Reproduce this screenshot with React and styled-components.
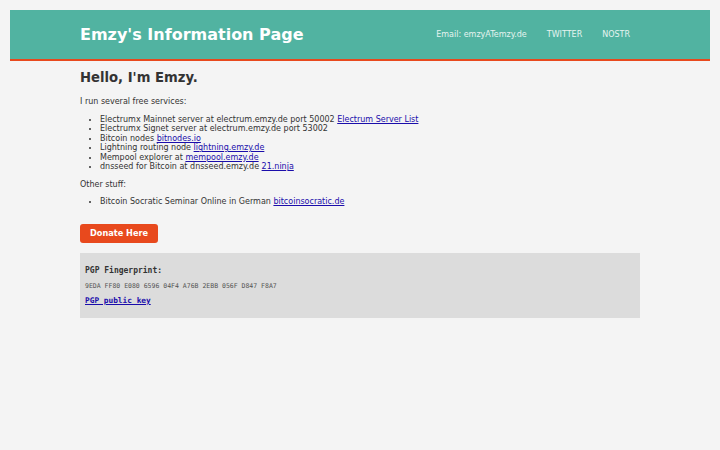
import styled, { createGlobalStyle } from 'styled-components';

const Global = createGlobalStyle`
  body {
    margin: 10px;
    background: #f4f4f4;
    font-family: "DejaVu Sans", sans-serif;
    font-size: 8px;
    line-height: 9.6px;
    color: #333;
  }
`;

const Header = styled.header`
  background: #51b3a1;
  border-bottom: 2px solid #e8491d;
  height: 49px;
  display: flex;
  align-items: center;
`;

const Container = styled.div`
  width: 560px;
  margin: 0 auto;
  display: flex;
  align-items: center;
  justify-content: space-between;
`;

const Title = styled.h1`
  margin: 0;
  color: #fff;
  font-size: 16px;
  font-weight: bold;
  line-height: 20px;
`;

const Nav = styled.nav`
  display: flex;
`;

const NavLink = styled.a`
  color: #e6f4f0;
  text-decoration: none;
  font-size: 8px;
  padding: 0 10px;
`;

const Main = styled.main`
  width: 560px;
  margin: 0 auto;
  padding-top: 9px;
`;

const Hello = styled.h2`
  margin: 0 0 11px;
  font-size: 13.2px;
  line-height: 16px;
  font-weight: bold;
`;

const Para = styled.p`
  margin: 0 0 8px;
`;

const List = styled.ul`
  margin: 0 0 8px;
  padding-left: 20px;
  line-height: 9.5px;
  li { margin: 0; }
`;

const Link = styled.a`
  color: #1a0dab;
  text-decoration: underline;
`;

const Donate = styled.a`
  display: inline-block;
  margin-top: 9px;
  background: #e8491d;
  color: #fff;
  font-weight: bold;
  font-size: 8.2px;
  line-height: 19px;
  padding: 0 10px;
  border-radius: 3px;
  text-decoration: none;
`;

const PgpBox = styled.section`
  margin-top: 10px;
  background: #dcdcdc;
  padding: 13px 5px 12px;
  font-family: "DejaVu Sans Mono", monospace;
`;

const PgpTitle = styled.div`
  font-weight: bold;
  font-size: 8px;
  line-height: 10px;
`;

const Fingerprint = styled.div`
  font-size: 6.5px;
  line-height: 8px;
  color: #555;
  margin: 6px 0 6px;
`;

const KeyLink = styled.a`
  font-weight: bold;
  font-size: 7.8px;
  line-height: 10px;
  color: #1a0dab;
`;

const services = [
  ['Electrumx Mainnet server at electrum.emzy.de port 50002 ', 'Electrum Server List'],
  ['Electrumx Signet server at electrum.emzy.de port 53002', null],
  ['Bitcoin nodes ', 'bitnodes.io'],
  ['Lightning routing node ', 'lightning.emzy.de'],
  ['Mempool explorer at ', 'mempool.emzy.de'],
  ['dnsseed for Bitcoin at dnsseed.emzy.de ', '21.ninja'],
];

export default function App() {
  return (
    <>
      <Global />
      <Header>
        <Container>
          <Title>Emzy's Information Page</Title>
          <Nav>
            <NavLink href="#">Email: emzyATemzy.de</NavLink>
            <NavLink href="#">TWITTER</NavLink>
            <NavLink href="#">NOSTR</NavLink>
          </Nav>
        </Container>
      </Header>
      <Main>
        <Hello>Hello, I'm Emzy.</Hello>
        <Para>I run several free services:</Para>
        <List>
          {services.map(([text, link]) => (
            <li key={text}>
              {text}
              {link && <Link href="#">{link}</Link>}
            </li>
          ))}
        </List>
        <Para>Other stuff:</Para>
        <List>
          <li>
            Bitcoin Socratic Seminar Online in German <Link href="#">bitcoinsocratic.de</Link>
          </li>
        </List>
        <Donate href="#">Donate Here</Donate>
        <PgpBox>
          <PgpTitle>PGP Fingerprint:</PgpTitle>
          <Fingerprint>9EDA FF80 E080 6596 04F4 A76B 2EBB 056F D847 F8A7</Fingerprint>
          <KeyLink href="#">PGP public key</KeyLink>
        </PgpBox>
      </Main>
    </>
  );
}
